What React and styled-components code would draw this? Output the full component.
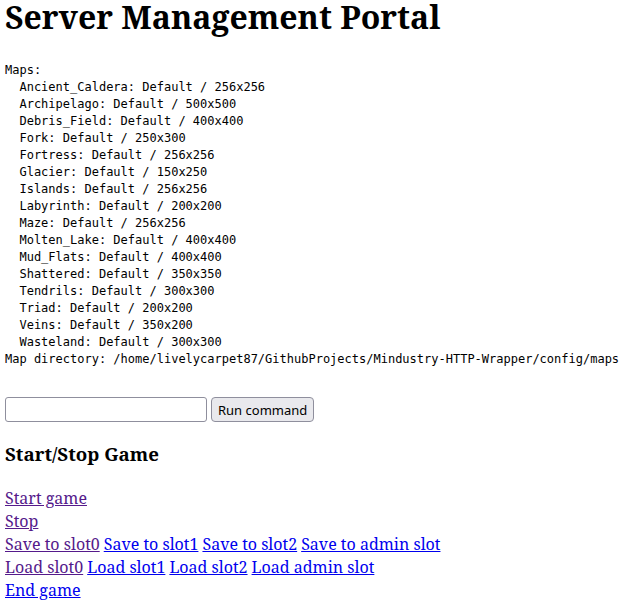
import styled, { createGlobalStyle } from 'styled-components';

const GlobalStyle = createGlobalStyle`
    html, body {
        margin: 0;
        padding: 0;
        background: #ffffff;
    }
    body {
        font-family: "Noto Serif", "DejaVu Serif", serif;
        color: #000000;
    }
`;

const Page = styled.div`
    padding: 0 5px;
`;

const Title = styled.h1`
    margin: 0;
    font-family: "Noto Serif", "DejaVu Serif", serif;
    font-size: 32px;
    line-height: 34px;
    font-weight: bold;
`;

const MapList = styled.pre`
    margin: 27.5px 0 0;
    font-family: "DejaVu Sans Mono", monospace;
    font-size: 12px;
    line-height: 17px;
`;

const CommandForm = styled.form`
    display: flex;
    align-items: center;
    gap: 4px;
    margin-top: 29.5px;
`;

const CommandInput = styled.input`
    box-sizing: border-box;
    width: 202px;
    height: 25px;
    margin: 0;
    padding: 2px 4px;
    border: 1px solid #8f8f9d;
    border-radius: 3px;
    background: #ffffff;
    font-family: "Noto Sans", sans-serif;
    font-size: 13px;
`;

const CommandButton = styled.button`
    box-sizing: border-box;
    height: 25px;
    margin: 0;
    padding: 0 6px;
    border: 1px solid #8f8f9d;
    border-radius: 4px;
    background: #e9e9ed;
    color: #000000;
    font-family: "Noto Sans", sans-serif;
    font-size: 13px;
`;

const Section = styled.h3`
    margin: 18.75px 0 0;
    font-family: "Noto Serif", "DejaVu Serif", serif;
    font-size: 18.72px;
    line-height: 26px;
    font-weight: bold;
`;

const Actions = styled.div`
    margin-top: 20.5px;
    font-size: 16px;
    line-height: 23px;
`;

const Row = styled.div`
    display: flex;
    flex-wrap: wrap;
    gap: 0 4px;
`;

const Action = styled.a`
    color: ${(p) => (p.$visited ? '#551a8b' : '#0000ee')};
    text-decoration: underline;
    cursor: pointer;
`;

const maps = [
    ['Ancient_Caldera', '256x256'],
    ['Archipelago', '500x500'],
    ['Debris_Field', '400x400'],
    ['Fork', '250x300'],
    ['Fortress', '256x256'],
    ['Glacier', '150x250'],
    ['Islands', '256x256'],
    ['Labyrinth', '200x200'],
    ['Maze', '256x256'],
    ['Molten_Lake', '400x400'],
    ['Mud_Flats', '400x400'],
    ['Shattered', '350x350'],
    ['Tendrils', '300x300'],
    ['Triad', '200x200'],
    ['Veins', '350x200'],
    ['Wasteland', '300x300'],
];

const rows = [
    [['Start game', true]],
    [['Stop', true]],
    [['Save to slot0', true], ['Save to slot1'], ['Save to slot2'], ['Save to admin slot']],
    [['Load slot0', true], ['Load slot1'], ['Load slot2'], ['Load admin slot']],
    [['End game']],
];

const mapText =
    'Maps:\n' +
    maps.map(([name, size]) => `  ${name}: Default / ${size}`).join('\n') +
    '\nMap directory: /home/livelycarpet87/GithubProjects/Mindustry-HTTP-Wrapper/config/maps';

export default function App() {
    return (
        <Page>
            <GlobalStyle />
            <Title>Server Management Portal</Title>
            <MapList>{mapText}</MapList>
            <CommandForm onSubmit={(e) => e.preventDefault()}>
                <CommandInput type="text" />
                <CommandButton type="submit">Run command</CommandButton>
            </CommandForm>
            <Section>Start/Stop Game</Section>
            <Actions>
                {rows.map((row, i) => (
                    <Row key={i}>
                        {row.map(([label, visited]) => (
                            <Action key={label} $visited={visited}>{label}</Action>
                        ))}
                    </Row>
                ))}
            </Actions>
        </Page>
    );
}
